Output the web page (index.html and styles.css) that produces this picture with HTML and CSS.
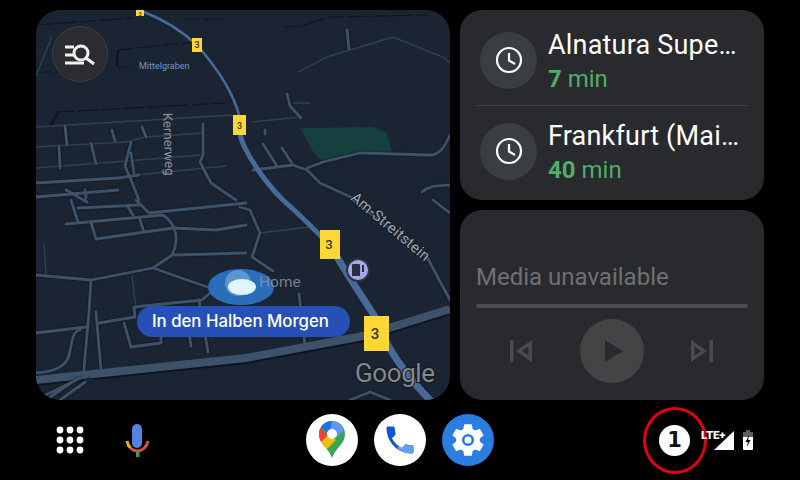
FILE: index.html
```html
<!DOCTYPE html>
<html lang="en">
<head>
    <meta charset="UTF-8">
    <meta name="viewport" content="width=device-width, initial-scale=1.0">
    <title>Android Auto</title>
    <link rel="stylesheet" href="styles.css">
</head>
<body>
    <main class="cards">
        <section class="map-card">
            <svg class="map" viewBox="36 10 414 390" width="414" height="390">
                <polygon class="park" points="300,128 373,127 387,133 392,153 360,153 323,162 312,150"/>

                <!-- dark boundary lines -->
                <g class="boundary">
                    <path d="M36 25 L133 18 M184 19 H229 M284 27 L300 26 L330 17 L430 15"/>
                    <path d="M118 50 L193 42 M118 67 H130 M36 72 H86 M58 112 L226 103"/>
                    <path d="M118 50 L117 66 M58 112 L51 125" class="boundary-wide"/>
                </g>

                <!-- thin streets -->
                <g class="street-thin">
                    <path d="M36 127 L233 115 M36 147 L126 142 L145 137 L203 133 M36 168 L203 155 M136 175 L226 166"/>
                    <path d="M298 72 L327 57 L393 37 L443 57 L450 63 M252 122 L301 117 M293 103 H310"/>
                    <path d="M260 233 L310 227 M36 76 L52 36"/>
                    <path d="M44 244 L46 275 M132 275 L136 310"/>
                </g>

                <!-- minor streets -->
                <g class="street">
                    <path d="M65 126 L67 145 M59 146 L60 168 M91 143 L96 164 M112 130 L115 141 M142 127 L146 137"/>
                    <path d="M203 124 V155 L200 162 L211 183 L236 200"/>
                    <path d="M131 142 L125 166 L131 180 L139 200 M131 153 L134 173"/>
                    <path d="M36 183 L118 178 L139 175 M36 197 L118 190 M66 190 L87 202 M85 190 L86 198"/>
                    <path d="M71 200 L78 222 M78 208 L139 205 M66 224 L163 215 C176 224 180 238 172 255 L153 268 L91 280 L36 275"/>
                    <path d="M91 222 L96 239 L173 228 L216 230 L246 225 M139 217 L144 232 M128 207 L133 215 M136 200 L149 213 L246 203"/>
                    <path d="M174 255 L246 253 M153 268 L210 288"/>
                    <path d="M91 280 L89 312 M96 312 L101 370 M89 312 L83 380"/>
                    <path d="M36 333 L86 327 M99 323 L135 317 L134 307 L202 300 L210 293"/>
                    <path d="M124 323 L131 347 L161 343 L161 338 M189 333 L191 346 M199 300 L208 352"/>
                    <path d="M80 330 C70 332 72 350 68 358 C64 368 50 372 36 373"/>
                    <path d="M240 207 L250 210 L260 233 L252 257 L273 271 M299 294 L305 345"/>
                    <path d="M263 144 L277 166 M282 148 L293 165 M253 170 L293 165 L307 170 L320 183 L357 200"/>
                    <path d="M307 168 L323 162 L360 153 L430 155 C440 155 445 146 450 135 M265 130 V134"/>
                    <path d="M347 30 L349 49 M287 94 L290 106 L301 118"/>
                    <path d="M422 192 C428 186 435 186 450 185 M353 200 L427 257 L450 300 M433 200 L450 213"/>
                    <path d="M350 400 L370 392 L390 400"/>
                    <path d="M301 345 L306 346"/>
                </g>

                <!-- main road with the junction -->
                <path class="road-shadow" d="M36 382 L103 375 L246 360 L363 338 L450 311"/>
                <path class="road" d="M36 380 L103 373 L246 358 L363 336 L450 309"/>
                <path class="street" d="M36 400 L80 378 M60 400 L88 380 M46 400 L72 382"/>
                <ellipse class="roundabout" cx="89" cy="380" rx="4" ry="2.5"/>

                <!-- highway -->
                <path class="motorway" d="M144 12 C170 22 185 34 197 45 C217 68 233 92 239 115"/>
                <path class="motorway motorway-mid" d="M239 115 C238 125 240 137 244 146 C254 166 268 185 283 200 C300 215 320 235 332 248"/>
                <path class="motorway motorway-low" d="M332 248 C345 272 362 296 375 317 C385 345 405 375 432 402"/>

                <text class="label-blue" x="139" y="69">Mittelgraben</text>
                <text class="label-grey" transform="translate(163 113) rotate(88)">Kernerweg</text>
                <text class="label-street" transform="translate(350 199) rotate(40)">Am-Streitstein</text>

                <!-- route shields -->
                <g class="shield">
                    <rect x="136" y="5" width="8" height="11"/>
                    <text class="shield-xs" x="140" y="15.500">3</text>
                    <rect x="192" y="38" width="10" height="14"/>
                    <text class="shield-sm" x="197" y="48">3</text>
                    <rect x="233" y="115" width="13" height="20"/>
                    <text class="shield-sm" x="239.500" y="129">3</text>
                    <rect x="320" y="230" width="20" height="29"/>
                    <text class="shield-md" x="329" y="249">3</text>
                    <rect x="364" y="316" width="25" height="35"/>
                    <text class="shield-lg" x="375" y="339">3</text>
                </g>

                <!-- gas station -->
                <circle class="poi-ring" cx="358" cy="270" r="12"/>
                <circle class="poi" cx="358" cy="270" r="10"/>
                <path class="poi-glyph" d="M352 265 Q352 264 353 264 H359 Q360 264 360 265 V276 H352 Z M362 265 H364 V272 H362 Z"/>

                <!-- current position -->
                <ellipse class="dot-halo" cx="241" cy="287" rx="33" ry="18"/>
                <circle class="dot-ball" cx="238" cy="283" r="13"/>
                <ellipse class="dot-core" cx="242" cy="287" rx="14" ry="8"/>

                <text class="label-home" x="259" y="287">Home</text>

                <rect class="pill" x="137" y="306" width="213" height="31" rx="15.500"/>
                <text class="pill-text" x="152" y="327">In den Halben Morgen</text>

                <text class="google" x="355" y="381.500">Google</text>
            </svg>
            <button class="search-btn">
                <svg viewBox="0 0 56 56" width="56" height="56">
                    <path class="search-glyph" d="M13 21 H22 M13 29 H22 M13 37 H32"/>
                    <circle class="search-glyph" cx="29" cy="27" r="7"/>
                    <path class="search-glyph" d="M34 32 L42 38"/>
                </svg>
            </button>
        </section>

        <div class="side">
            <section class="card nav-card">
                <div class="dest">
                    <span class="dest-icon">
                        <svg viewBox="0 0 28 28" width="28" height="28">
                            <circle class="clock" cx="14" cy="14" r="12"/>
                            <path class="clock" d="M14 7 V14.500 L20 18"/>
                        </svg>
                    </span>
                    <div class="dest-text">
                        <div class="dest-name">Alnatura Supe…</div>
                        <div class="dest-time"><b>7</b> min</div>
                    </div>
                </div>
                <div class="divider"></div>
                <div class="dest">
                    <span class="dest-icon">
                        <svg viewBox="0 0 28 28" width="28" height="28">
                            <circle class="clock" cx="14" cy="14" r="12"/>
                            <path class="clock" d="M14 7 V14.500 L20 18"/>
                        </svg>
                    </span>
                    <div class="dest-text">
                        <div class="dest-name">Frankfurt (Mai…</div>
                        <div class="dest-time"><b>40</b> min</div>
                    </div>
                </div>
            </section>

            <section class="card media-card">
                <div class="media-title">Media unavailable</div>
                <div class="media-bar"></div>
                <div class="media-controls">
                    <svg viewBox="0 0 24 24" width="24" height="24">
                        <path class="media-glyph" fill-rule="evenodd" d="M1 1 H4.500 V23 H1 Z M23 1 V23 L7 12 Z M19.500 7.500 L13 12 L19.500 16.500 Z"/>
                    </svg>
                    <span class="play-btn">
                        <svg viewBox="0 0 18 22" width="18" height="22">
                            <path class="play-glyph" d="M0 0 L18 11 L0 22 Z"/>
                        </svg>
                    </span>
                    <svg viewBox="0 0 24 24" width="24" height="24">
                        <path class="media-glyph" fill-rule="evenodd" d="M23 1 H19.500 V23 H23 Z M1 1 V23 L17 12 Z M4.500 7.500 L11 12 L4.500 16.500 Z"/>
                    </svg>
                </div>
            </section>
        </div>
    </main>

    <footer class="dock">
        <div class="dock-left">
            <svg viewBox="0 0 48 48" width="48" height="48">
                <g class="launcher">
                    <circle cx="14" cy="14" r="3.400"/><circle cx="24" cy="14" r="3.400"/><circle cx="34" cy="14" r="3.400"/>
                    <circle cx="14" cy="24" r="3.400"/><circle cx="24" cy="24" r="3.400"/><circle cx="34" cy="24" r="3.400"/>
                    <circle cx="14" cy="34" r="3.400"/><circle cx="24" cy="34" r="3.400"/><circle cx="34" cy="34" r="3.400"/>
                </g>
            </svg>
            <svg viewBox="0 0 48 48" width="48" height="48">
                <rect x="19" y="8" width="10" height="24" rx="5" fill="#5086e0"/>
                <path d="M14 25 C14.500 28 15.500 30 17.500 32" fill="none" stroke="#e8b21e" stroke-width="3"/>
                <path d="M17.500 32 C20 34.500 22 35 24.500 35 C29 35 34 31 35 25" fill="none" stroke="#d4503f" stroke-width="3"/>
                <rect x="23" y="36" width="3.500" height="5" fill="#2f9e5a"/>
            </svg>
        </div>

        <div class="dock-apps">
            <span class="app app-white">
                <svg viewBox="0 0 52 52" width="52" height="52">
                    <clipPath id="pin">
                        <path d="M26 7 C18.800 7 13 12.800 13 20 C13 30 22 33 26 44 C30 33 39 30 39 20 C39 12.800 33.200 7 26 7 Z"/>
                    </clipPath>
                    <g clip-path="url(#pin)">
                        <rect x="10" y="5" width="32" height="40" fill="#34a853"/>
                        <polygon points="10,33 22,21 30,26 18,38 14,38" fill="#fbbc04"/>
                        <polygon points="8,8 22,21 8,35" fill="#ea4335"/>
                        <polygon points="14,13 22,4 33,10 24,20" fill="#1a73e8"/>
                        <polygon points="27,4 44,4 44,10 31,23 24,16" fill="#5e97f6"/>
                    </g>
                    <circle cx="26" cy="20" r="5" fill="#fff"/>
                </svg>
            </span>
            <span class="app app-white">
                <svg viewBox="0 0 52 52" width="52" height="52">
                    <clipPath id="earpiece"><rect x="24" y="24" width="20" height="20"/></clipPath>
                    <g transform="translate(8 8) scale(1.500)">
                        <path fill="#0b57d0" d="M6.620 10.790c1.440 2.830 3.760 5.140 6.590 6.590l2.200-2.200c.27-.27.67-.36 1.020-.24 1.120.37 2.330.57 3.570.57.55 0 1 .45 1 1V20c0 .55-.45 1-1 1-9.390 0-17-7.610-17-17 0-.55.45-1 1-1h3.500c.55 0 1 .45 1 1 0 1.250.2 2.450.57 3.570.11.35.03.74-.25 1.020l-2.200 2.200z"/>
                    </g>
                    <g clip-path="url(#earpiece)">
                        <g transform="translate(8 8) scale(1.500)">
                            <path fill="#669df6" d="M6.620 10.790c1.440 2.830 3.760 5.140 6.590 6.590l2.200-2.200c.27-.27.67-.36 1.020-.24 1.120.37 2.330.57 3.570.57.55 0 1 .45 1 1V20c0 .55-.45 1-1 1-9.390 0-17-7.610-17-17 0-.55.45-1 1-1h3.500c.55 0 1 .45 1 1 0 1.250.2 2.450.57 3.570.11.35.03.74-.25 1.020l-2.200 2.200z"/>
                        </g>
                    </g>
                </svg>
            </span>
            <span class="app app-blue">
                <svg viewBox="0 0 52 52" width="52" height="52">
                    <g transform="translate(6.200 6.200) scale(1.650)">
                        <path fill="#fff" d="M19.140 12.940c.04-.3.06-.61.06-.94 0-.32-.02-.64-.07-.94l2.030-1.580c.18-.14.23-.41.12-.61l-1.920-3.320c-.12-.22-.37-.29-.59-.22l-2.390.96c-.5-.38-1.030-.7-1.620-.94l-.36-2.540c-.04-.24-.24-.41-.48-.41h-3.840c-.24 0-.43.17-.47.41l-.36 2.540c-.59.24-1.130.57-1.620.94l-2.390-.96c-.22-.08-.47 0-.59.22L2.740 8.870c-.12.21-.08.47.12.61l2.030 1.580c-.05.3-.09.63-.09.94s.02.64.07.94l-2.030 1.580c-.18.14-.23.41-.12.61l1.920 3.320c.12.22.37.29.59.22l2.390-.96c.5.38 1.030.7 1.620.94l.36 2.540c.05.24.24.41.48.41h3.840c.24 0 .44-.17.47-.41l.36-2.540c.59-.24 1.130-.56 1.620-.94l2.390.96c.22.08.47 0 .59-.22l1.920-3.320c.12-.22.07-.47-.12-.61l-2.010-1.580z"/>
                    </g>
                    <circle cx="26" cy="26" r="4.800" fill="#fff" stroke="#2a7de1" stroke-width="2.600"/>
                </svg>
            </span>
        </div>

        <div class="dock-right">
            <span class="badge">1<span class="badge-ring"></span></span>
            <div class="status">
                <span class="lte">LTE+</span>
                <svg class="signal" viewBox="0 0 20 19" width="20" height="19">
                    <path d="M0 19 L20 0 V19 Z" fill="#fff"/>
                </svg>
                <svg class="battery" viewBox="0 0 10 20" width="10" height="20">
                    <path d="M3 0 H7 V2 H10 V7 H0 V2 H3 Z" fill="#5f5f5f"/>
                    <path d="M0 7 H10 V19 Q10 20 9 20 H1 Q0 20 0 19 Z" fill="#fff"/>
                    <path d="M6 5 L2.500 12 H4.800 L4 17 L7.500 10 H5.200 Z" fill="#000"/>
                </svg>
            </div>
        </div>
    </footer>
</body>
</html>
```

FILE: styles.css
```css
* {
    box-sizing: border-box;
}

body {
    margin: 0;
    width: 800px;
    height: 480px;
    overflow: hidden;
    background-color: #000;
    font-family: Roboto, "Liberation Sans", sans-serif;
    display: flex;
    flex-direction: column;
}

.cards {
    display: flex;
    gap: 10px;
    height: 400px;
    padding: 10px 36px 0;
}

.map-card {
    position: relative;
    width: 414px;
    height: 390px;
    border-radius: 24px;
    overflow: hidden;
    background-color: #1a2433;
}

.map {
    display: block;
}

.map path {
    fill: none;
}

.park {
    fill: #16403f;
}

.boundary path {
    stroke: #0e1420;
    stroke-width: 1.2;
    stroke-dasharray: 16 3 22 4;
}

.boundary .boundary-wide {
    stroke-width: 2.5;
    stroke-dasharray: none;
}

.street-thin path {
    stroke: #2f4053;
    stroke-width: 1.4;
}

.street {
    filter: drop-shadow(0 0 1px #0e1420);
}

.street path,
path.street {
    stroke: #3d5269;
    stroke-width: 2.8;
    stroke-linejoin: round;
    stroke-linecap: round;
}

.map .road {
    stroke: #3d5269;
    stroke-width: 8;
}

.map .road-shadow {
    stroke: #0e1420;
    stroke-width: 8;
}

.map .roundabout {
    fill: #1a2433;
}

.map .motorway {
    stroke: #486a98;
    stroke-width: 2.6;
}

.map .motorway-mid {
    stroke-width: 5;
}

.map .motorway-low {
    stroke-width: 7;
}

.label-blue {
    font-size: 9px;
    fill: #6b96d0;
}

.label-grey {
    font-size: 13.2px;
    fill: #8d9298;
}

.label-street {
    font-size: 14.8px;
    letter-spacing: 0.3px;
    fill: #a3a7ac;
    paint-order: stroke;
    stroke: #161d2a;
    stroke-width: 2px;
}

.label-home {
    font-size: 15.5px;
    fill: #8a9097;
    fill-opacity: 0.85;
}

.shield rect {
    fill: #fdd835;
}

.shield text {
    fill: #3a3520;
    font-weight: 500;
    text-anchor: middle;
}

.shield .shield-xs {
    font-size: 5.5px;
}

.shield .shield-sm {
    font-size: 9px;
}

.shield .shield-md {
    font-size: 13px;
}

.shield .shield-lg {
    font-size: 15px;
}

.poi-ring {
    fill: #2d3240;
}

.poi {
    fill: #a5a8e6;
}

.map .poi-glyph {
    fill: #2b2d45;
}

.dot-halo {
    fill: #2a6db8;
}

.dot-ball {
    fill: #6a9fd8;
    opacity: 0.8;
}

.dot-core {
    fill: #e2f5ff;
}

.pill {
    fill: #2650b8;
}

.pill-text {
    font-family: Inter, Roboto, sans-serif;
    font-size: 16.8px;
    font-weight: 500;
    fill: #fff;
}

.google {
    font-size: 26px;
    letter-spacing: -0.4px;
    fill: #83878d;
    paint-order: stroke;
    stroke: #14181f;
    stroke-width: 2px;
}

.search-btn {
    position: absolute;
    top: 16px;
    left: 16px;
    width: 56px;
    height: 56px;
    padding: 0;
    border: 1.5px solid #3f403e;
    border-radius: 50%;
    background-color: #2a2c30;
    display: flex;
    align-items: center;
    justify-content: center;
}

.search-btn svg {
    flex: none;
}

.search-glyph {
    fill: none;
    stroke: #f1f1f1;
    stroke-width: 3;
}

.side {
    display: flex;
    flex-direction: column;
    gap: 10px;
    width: 304px;
    height: 390px;
}

.card {
    height: 190px;
    border-radius: 22px;
    background-color: #292a2e;
    padding: 0 16px;
}

.nav-card {
    padding-top: 5px;
}

.dest {
    display: flex;
    align-items: center;
    gap: 11px;
    height: 90px;
    margin-left: 4px;
}

.dest-icon {
    flex: none;
    width: 57px;
    height: 57px;
    border-radius: 50%;
    background-color: #3b3e40;
    display: flex;
    align-items: center;
    justify-content: center;
}

.clock {
    fill: none;
    stroke: #fff;
    stroke-width: 2.200;
}

.dest-text {
    flex: 1;
    padding-top: 2px;
    white-space: nowrap;
}

.dest-name {
    font-size: 27px;
    line-height: 34px;
    letter-spacing: 0.2px;
    color: #fff;
}

.dest-time {
    margin-top: 2px;
    font-size: 24px;
    line-height: 30px;
    color: #4fae69;
}

.dest-time b {
    font-weight: 700;
}

.divider {
    height: 1px;
    background-color: #3d3e41;
}

.media-card {
    display: flex;
    flex-direction: column;
}

.media-title {
    margin-top: 53px;
    font-size: 24px;
    line-height: 28px;
    color: #6f7073;
}

.media-bar {
    height: 4px;
    margin-top: 13px;
    border-radius: 2px;
    background-color: #4a4b4e;
}

.media-controls {
    display: flex;
    align-items: center;
    justify-content: space-between;
    margin-top: 11px;
    padding: 0 34px 0 33px;
}

.media-glyph {
    fill: #4a4b4d;
}

.play-btn {
    width: 64px;
    height: 64px;
    border-radius: 50%;
    background-color: #434446;
    display: flex;
    align-items: center;
    justify-content: center;
    padding-left: 4px;
}

.play-glyph {
    fill: #292a2e;
}

.dock {
    flex: 1;
    display: grid;
    grid-template-columns: 1fr auto 1fr;
    align-items: center;
    padding: 0 47px 0 46px;
}

.dock-left {
    display: flex;
    gap: 19px;
}

.launcher {
    fill: #fff;
}

.dock-apps {
    display: flex;
    gap: 16px;
}

.app {
    width: 52px;
    height: 52px;
    border-radius: 50%;
    display: block;
}

.app-white {
    background-color: #fff;
}

.app-blue {
    background-color: #2a7de1;
}

.dock-right {
    display: flex;
    justify-content: flex-end;
    align-items: center;
    gap: 11px;
}

.badge {
    position: relative;
    width: 31px;
    height: 31px;
    border-radius: 50%;
    background-color: #fff;
    color: #111;
    font-family: "DejaVu Sans", sans-serif;
    font-size: 21px;
    font-weight: 700;
    line-height: 31px;
    text-align: center;
}

.badge-ring {
    position: absolute;
    top: -18px;
    left: -16px;
    width: 64px;
    height: 67px;
    border: 3.5px solid #e3000f;
    border-radius: 50%;
}

.status {
    position: relative;
    width: 52px;
    height: 20px;
    display: flex;
    align-items: flex-end;
    justify-content: flex-end;
    gap: 9px;
}

.lte {
    position: absolute;
    left: 0;
    top: 0;
    font-size: 11.5px;
    font-weight: 900;
    line-height: 11px;
    letter-spacing: -0.2px;
    color: #fff;
}

.signal,
.battery {
    display: block;
}
```
